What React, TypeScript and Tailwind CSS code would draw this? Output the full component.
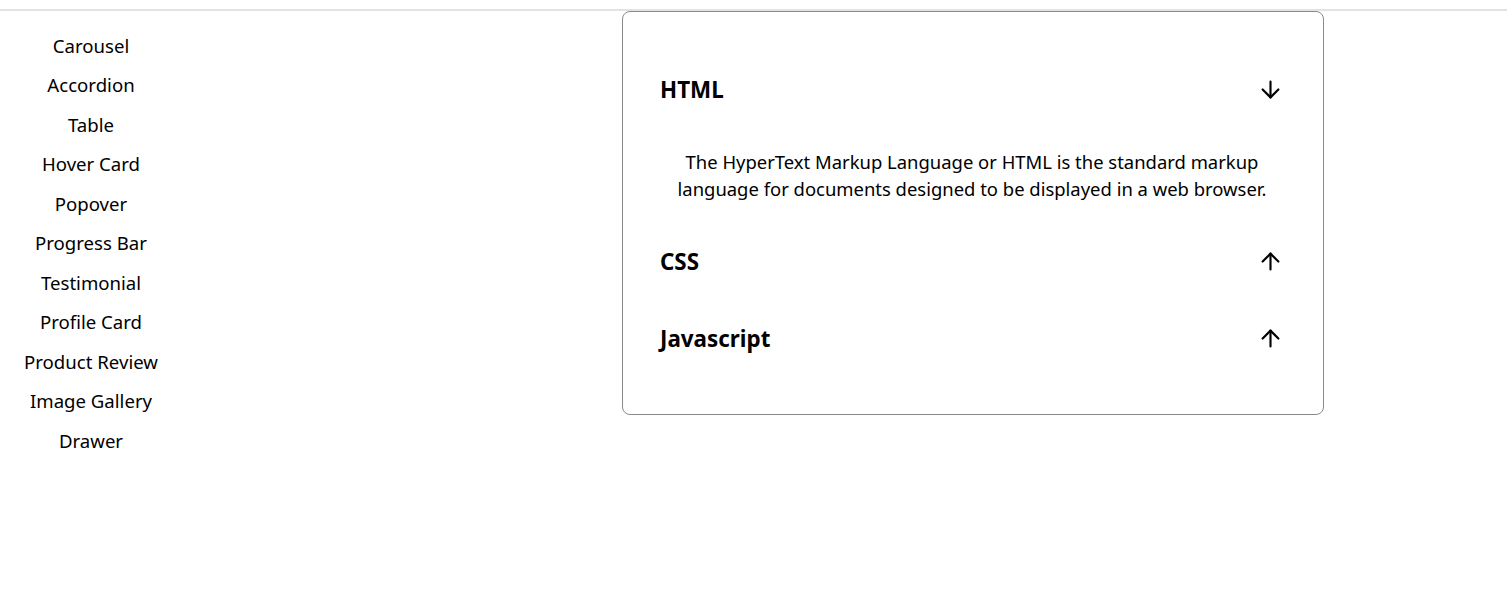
import React, { useState } from 'react';
import { ArrowDown, ArrowUp } from 'lucide-react';

const links = [
  'Carousel',
  'Accordion',
  'Table',
  'Hover Card',
  'Popover',
  'Progress Bar',
  'Testimonial',
  'Profile Card',
  'Product Review',
  'Image Gallery',
  'Drawer',
];

const items = [
  {
    title: 'HTML',
    body: 'The HyperText Markup Language or HTML is the standard markup language for documents designed to be displayed in a web browser.',
  },
  {
    title: 'CSS',
    body: 'Cascading Style Sheets is a style sheet language used for specifying the presentation and styling of a document written in a markup language.',
  },
  {
    title: 'Javascript',
    body: 'JavaScript is a programming language and core technology of the web, alongside HTML and CSS.',
  },
];

export default function App() {
  const [open, setOpen] = useState<number | null>(0);

  return (
    <div className="min-h-screen bg-white text-black" style={{ fontFamily: '"Noto Sans", "Open Sans", sans-serif' }}>
      <div className="h-[11px] border-b-2 border-[#e3e3e3]" />
      <div className="flex">
        <nav className="w-[182px] pt-[15px] flex flex-col">
          {links.map((l) => (
            <a key={l} href="#" className="h-[39.5px] flex items-center justify-center text-[18.6px]">
              {l}
            </a>
          ))}
        </nav>
        <div className="ml-[440px] w-[702px] h-[404px] border border-[#8a8a8a] rounded-lg pt-[39px] pl-[37px] pr-[39px]">
          {items.map((it, i) => (
            <div key={it.title}>
              <button
                onClick={() => setOpen(open === i ? null : i)}
                className="w-full h-[77px] flex items-center justify-between"
              >
                <span className="text-[22.4px] font-bold">{it.title}</span>
                {open === i ? (
                  <ArrowDown size={27} strokeWidth={1.9} />
                ) : (
                  <ArrowUp size={27} strokeWidth={1.9} />
                )}
              </button>
              {open === i && (
                <p className="text-center text-[18.45px] leading-[27px] pt-[20px] pb-[21px] px-[4px]">{it.body}</p>
              )}
            </div>
          ))}
        </div>
      </div>
    </div>
  );
}
